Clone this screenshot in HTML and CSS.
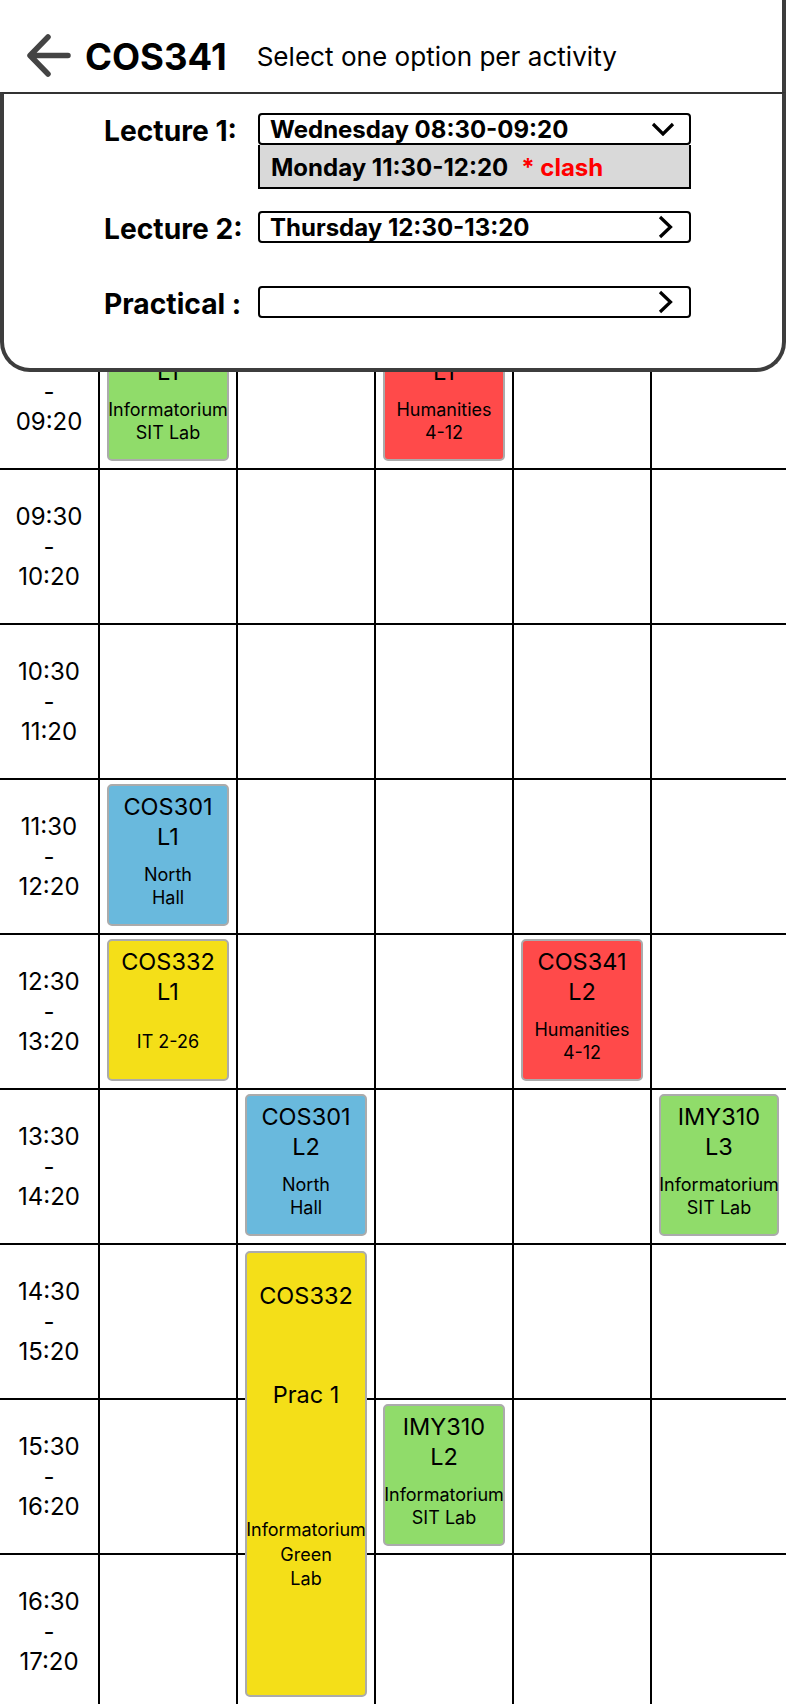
FILE: index.html
```html
<!DOCTYPE html>
<html lang="en">
<head>
<meta charset="utf-8">
<title>COS341 – Select options</title>
<link rel="stylesheet" href="styles.css">
</head>
<body>
<div class="app">
  <header class="topbar">
    <svg class="back" width="44" height="44" viewBox="0 0 44 44" aria-label="Back">
      <path d="M41 21.5 H4 M21 3 L3 21.5 L21 40" fill="none" stroke="#444" stroke-width="5.5" stroke-linecap="round" stroke-linejoin="round"/>
    </svg>
    <h1 class="course">COS341</h1>
    <p class="hint">Select one option per activity</p>
  </header>

  <main class="timetable">
    <div class="row">
      <div class="time">08:30<br>-<br>09:20</div>
      <div class="cell"><div class="event green"><div class="ev-title">IMY310<br>L1</div><div class="ev-venue">Informatorium<br>SIT Lab</div></div></div>
      <div class="cell"></div>
      <div class="cell"><div class="event red"><div class="ev-title">COS341<br>L1</div><div class="ev-venue">Humanities<br>4-12</div></div></div>
      <div class="cell"></div>
      <div class="cell"></div>
    </div>
    <div class="row">
      <div class="time">09:30<br>-<br>10:20</div>
      <div class="cell"></div><div class="cell"></div><div class="cell"></div><div class="cell"></div><div class="cell"></div>
    </div>
    <div class="row">
      <div class="time">10:30<br>-<br>11:20</div>
      <div class="cell"></div><div class="cell"></div><div class="cell"></div><div class="cell"></div><div class="cell"></div>
    </div>
    <div class="row">
      <div class="time">11:30<br>-<br>12:20</div>
      <div class="cell"><div class="event blue"><div class="ev-title">COS301<br>L1</div><div class="ev-venue">North<br>Hall</div></div></div>
      <div class="cell"></div><div class="cell"></div><div class="cell"></div><div class="cell"></div>
    </div>
    <div class="row">
      <div class="time">12:30<br>-<br>13:20</div>
      <div class="cell"><div class="event yellow"><div class="ev-title">COS332<br>L1</div><div class="ev-venue">IT 2-26</div></div></div>
      <div class="cell"></div>
      <div class="cell"></div>
      <div class="cell"><div class="event red"><div class="ev-title">COS341<br>L2</div><div class="ev-venue">Humanities<br>4-12</div></div></div>
      <div class="cell"></div>
    </div>
    <div class="row">
      <div class="time">13:30<br>-<br>14:20</div>
      <div class="cell"></div>
      <div class="cell"><div class="event blue"><div class="ev-title">COS301<br>L2</div><div class="ev-venue">North<br>Hall</div></div></div>
      <div class="cell"></div>
      <div class="cell"></div>
      <div class="cell"><div class="event green"><div class="ev-title">IMY310<br>L3</div><div class="ev-venue">Informatorium<br>SIT Lab</div></div></div>
    </div>
    <div class="row">
      <div class="time">14:30<br>-<br>15:20</div>
      <div class="cell"></div>
      <div class="cell"><div class="event yellow prac"><div class="ev-title">COS332</div><div class="ev-type">Prac 1</div><div class="prac-venue">Informatorium<br>Green<br>Lab</div></div></div>
      <div class="cell"></div><div class="cell"></div><div class="cell"></div>
    </div>
    <div class="row">
      <div class="time">15:30<br>-<br>16:20</div>
      <div class="cell"></div>
      <div class="cell"></div>
      <div class="cell"><div class="event green"><div class="ev-title">IMY310<br>L2</div><div class="ev-venue">Informatorium<br>SIT Lab</div></div></div>
      <div class="cell"></div><div class="cell"></div>
    </div>
    <div class="row">
      <div class="time">16:30<br>-<br>17:20</div>
      <div class="cell"></div><div class="cell"></div><div class="cell"></div><div class="cell"></div><div class="cell"></div>
    </div>
  </main>

  <section class="sheet">
    <div class="field">
      <div class="label">Lecture 1:</div>
      <div class="control">
        <div class="select">
          <span>Wednesday 08:30-09:20</span>
          <svg class="chev-down" width="24" height="14" viewBox="0 0 24 14"><polyline points="2,2 12,12 22,2" fill="none" stroke="#000" stroke-width="3.2"/></svg>
        </div>
        <div class="option"><span>Monday 11:30-12:20</span><span class="clash">* clash</span></div>
      </div>
    </div>
    <div class="field f2">
      <div class="label">Lecture 2:</div>
      <div class="control">
        <div class="select">
          <span>Thursday 12:30-13:20</span>
          <svg class="chev-right" width="15" height="24" viewBox="0 0 15 24"><polyline points="2,2 12.5,12 2,22" fill="none" stroke="#000" stroke-width="3.2"/></svg>
        </div>
      </div>
    </div>
    <div class="field f3">
      <div class="label">Practical :</div>
      <div class="control">
        <div class="select">
          <span></span>
          <svg class="chev-right" width="15" height="24" viewBox="0 0 15 24"><polyline points="2,2 12.5,12 2,22" fill="none" stroke="#000" stroke-width="3.2"/></svg>
        </div>
      </div>
    </div>
  </section>
</div>
</body>
</html>
```

FILE: styles.css
```css
* { box-sizing: border-box; }

html, body {
  margin: 0;
  padding: 0;
  background: #fff;
}

body {
  font-family: Inter, "Noto Sans", sans-serif;
  color: #000;
}

.app {
  position: relative;
  width: 786px;
}

/* ---------- top bar ---------- */
.topbar {
  height: 92px;
  display: flex;
  align-items: center;
  padding: 18px 0 0 27px;
  border-right: 4px solid #3d3d3d;
}

.back {
  flex: none;
  margin-top: 2px;
}

.course {
  margin: 4px 0 0 14px;
  font-size: 36.5px;
  font-weight: 700;
  line-height: 40px;
}

.hint {
  margin: 4px 0 0 30px;
  font-size: 26.1px;
  font-weight: 400;
  line-height: 40px;
}

/* ---------- timetable ---------- */
.timetable {
  margin-top: 221px;
}

.row {
  display: grid;
  grid-template-columns: 98px 138px 138px 138px 138px 136px;
  grid-template-rows: 153px;
  height: 155px;
  border-top: 2px solid #000;
}

.time {
  display: flex;
  align-items: center;
  justify-content: center;
  text-align: center;
  font-size: 24px;
  line-height: 30px;
}

.cell {
  border-left: 2px solid #000;
  padding: 4px 7px 0 7px;
  min-height: 0;
}

.event {
  height: 142px;
  border: 2px solid #ababab;
  border-radius: 5px;
  padding-top: 6px;
  display: flex;
  flex-direction: column;
  align-items: center;
  text-align: center;
  white-space: nowrap;
}

.ev-title {
  font-size: 23.5px;
  line-height: 30px;
}

.ev-venue {
  margin-top: 11px;
  height: 46px;
  display: flex;
  align-items: center;
  justify-content: center;
  font-size: 18px;
  line-height: 23px;
}

.green  { background: #90dc6a; }
.red    { background: #ff4a4a; }
.blue   { background: #69b9dd; }
.yellow { background: #f4df18; }

.prac {
  position: relative;
  z-index: 1;
  height: 446px;
  margin-top: 2px;
  padding-top: 28px;
}

.ev-type {
  margin-top: 69px;
  font-size: 23.5px;
  line-height: 30px;
}

.prac-venue {
  margin-top: 108px;
  font-size: 18px;
  line-height: 24.5px;
}

/* ---------- option sheet ---------- */
.sheet {
  position: absolute;
  top: 92px;
  left: 0;
  width: 786px;
  height: 280px;
  background: #fff;
  border: 4px solid #3d3d3d;
  border-top: 2px solid #333;
  border-radius: 0 0 30px 30px;
  padding-top: 19px;
  z-index: 5;
}

.field {
  display: grid;
  grid-template-columns: 235px 433px;
  column-gap: 19px;
  align-items: start;
}

.f2 { margin-top: 22px; }
.f3 { margin-top: 41px; }

.label {
  height: 34px;
  line-height: 36px;
  padding-left: 100px;
  font-size: 28.2px;
  font-weight: 700;
  white-space: nowrap;
}

.select {
  height: 32px;
  border: 2px solid #000;
  border-radius: 4px;
  display: flex;
  align-items: center;
  justify-content: space-between;
  padding: 0 14px 0 10px;
  font-size: 24px;
  font-weight: 700;
  white-space: nowrap;
}

.select .chev-right { margin-right: 2px; }

.option {
  height: 44px;
  background: #d9d9d9;
  border: 2px solid #000;
  border-top: 0;
  padding: 3px 0 0 11px;
  display: flex;
  align-items: center;
  font-size: 24px;
  font-weight: 700;
  white-space: nowrap;
}

.clash {
  margin-left: 13px;
  color: #ff0000;
}
```
